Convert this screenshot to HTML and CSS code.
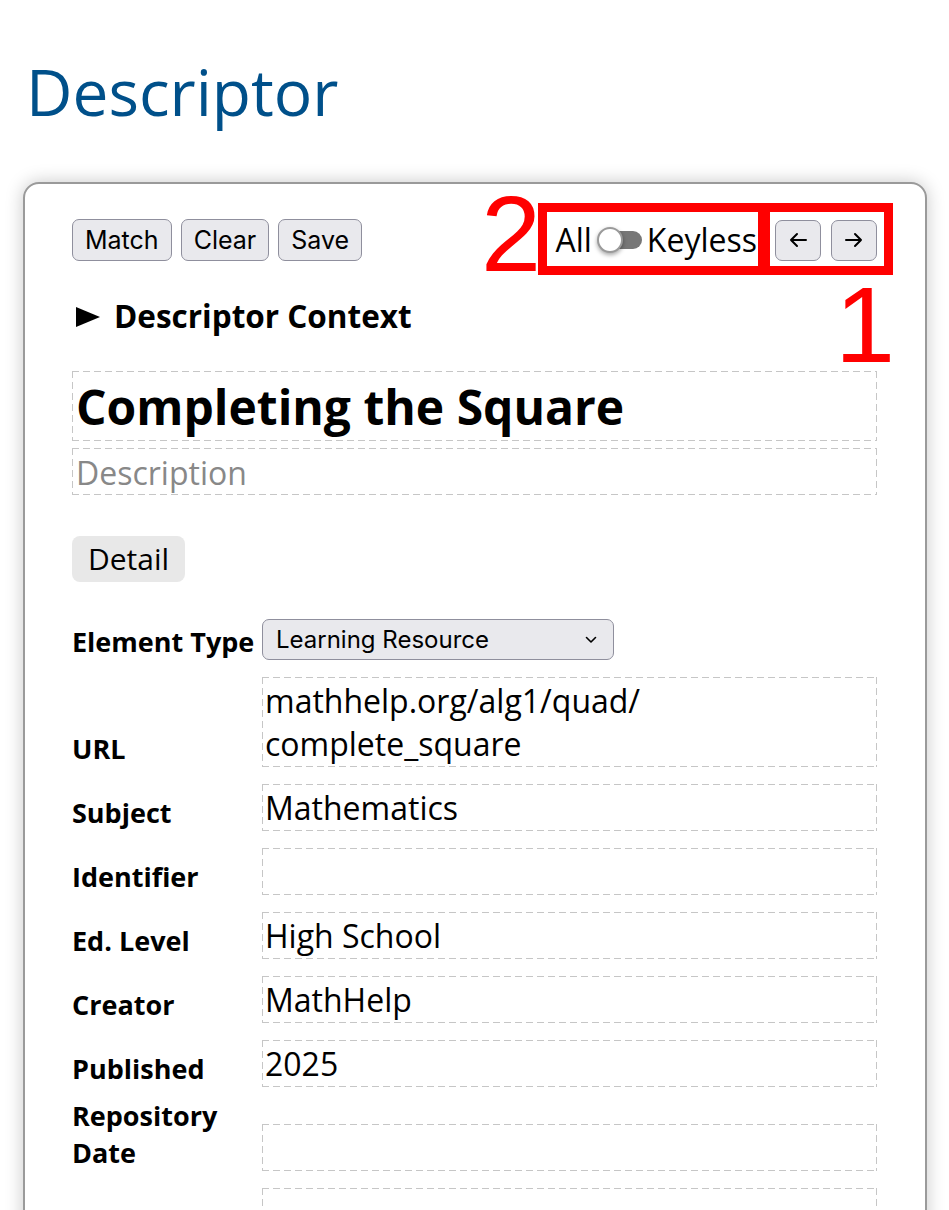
FILE: index.html
```html
<!DOCTYPE html>
<html lang="en">
<head>
<meta charset="utf-8">
<title>Descriptor</title>
<link rel="stylesheet" href="styles.css">
</head>
<body>
<h1 class="page-title">Descriptor</h1>
<section class="card">
  <div class="toolbar">
    <div class="actions">
      <button class="btn">Match</button>
      <button class="btn">Clear</button>
      <button class="btn">Save</button>
    </div>
    <div class="controls">
      <div class="mode-switch">
        <span>All</span>
        <span class="toggle"><span class="toggle-track"></span><span class="toggle-knob"></span></span>
        <span>Keyless</span>
      </div>
      <div class="nav">
        <button class="btn btn-icon" aria-label="Previous"><svg width="20" height="16" viewBox="0 0 20 16"><path d="M18 8H3M9 2L3 8l6 6" fill="none" stroke="#000" stroke-width="2" stroke-linecap="round" stroke-linejoin="round"/></svg></button>
        <button class="btn btn-icon" aria-label="Next"><svg width="20" height="16" viewBox="0 0 20 16"><path d="M2 8h15M11 2l6 6-6 6" fill="none" stroke="#000" stroke-width="2" stroke-linecap="round" stroke-linejoin="round"/></svg></button>
      </div>
    </div>
  </div>

  <div class="context"><svg class="context-marker" width="24" height="20" viewBox="0 0 24 20"><path d="M0 0L24 10L0 20Z" fill="#000"/></svg>Descriptor Context</div>

  <div class="title-field dashed">Completing the Square</div>
  <div class="desc-field dashed">Description</div>

  <button class="detail-btn">Detail</button>

  <div class="fields">
    <div class="label">Element Type</div>
    <div class="select">Learning Resource<svg class="chevron" width="12" height="8" viewBox="0 0 12 8"><path d="M1.5 1.5L6 6l4.5-4.5" fill="none" stroke="#000" stroke-width="1.6" stroke-linecap="round" stroke-linejoin="round"/></svg></div>

    <div class="label">URL</div>
    <div class="value dashed">mathhelp.org/alg1/quad/<br>complete_square</div>

    <div class="label">Subject</div>
    <div class="value dashed">Mathematics</div>

    <div class="label">Identifier</div>
    <div class="value dashed"></div>

    <div class="label">Ed. Level</div>
    <div class="value dashed">High School</div>

    <div class="label">Creator</div>
    <div class="value dashed">MathHelp</div>

    <div class="label">Published</div>
    <div class="value dashed">2025</div>

    <div class="label">Repository Date</div>
    <div class="value dashed"></div>

    <div class="label"></div>
    <div class="value dashed"></div>
  </div>

  <div class="mark-box mark-box-2"></div>
  <div class="mark-box mark-box-1"></div>
  <div class="mark-num mark-num-2">2</div>
  <div class="mark-num mark-num-1">1</div>
</section>
</body>
</html>
```

FILE: styles.css
```css
* { box-sizing: border-box; }

html, body {
  margin: 0;
  padding: 0;
  background: #fff;
  overflow: hidden;
}

body {
  font-family: "Open Sans", "Noto Sans", sans-serif;
  color: #000;
  padding: 0 22px 0 23px;
  height: 1210px;
}

.page-title {
  font-family: "Open Sans", sans-serif;
  font-weight: 400;
  font-size: 64px;
  line-height: normal;
  color: #00508a;
  margin: 0;
  padding: 48px 0 47px 3px;
}

.card {
  position: relative;
  border: 2px solid #9a9a9a;
  border-radius: 16px;
  box-shadow: 0 0 18px rgba(0, 0, 0, 0.22);
  padding: 35px 48px 40px 47px;
  background: #fff;
  height: 1200px;
}

.toolbar {
  display: flex;
  justify-content: space-between;
  align-items: center;
  height: 42px;
}

.actions {
  display: flex;
  gap: 9px;
}

.btn {
  font-family: Inter, "Liberation Sans", sans-serif;
  font-size: 25px;
  color: #000;
  background: #e9e9ed;
  border: 1px solid #8f8f9d;
  border-radius: 7px;
  height: 42px;
  padding: 0 12px;
  margin: 0;
  line-height: 40px;
}

.controls {
  display: flex;
  align-items: center;
  gap: 18px;
}

.mode-switch {
  display: flex;
  align-items: center;
  gap: 5px;
  font-size: 32px;
  line-height: 42px;
}

.toggle {
  position: relative;
  display: inline-block;
  width: 45px;
  height: 28px;
}

.toggle-track {
  position: absolute;
  right: 0;
  top: 5px;
  width: 38px;
  height: 18px;
  border-radius: 9px;
  background: #777;
}

.toggle-knob {
  position: absolute;
  left: 0;
  top: 1px;
  width: 26px;
  height: 26px;
  border-radius: 50%;
  background: #fff;
  border: 2px solid #9a9a9a;
  box-shadow: 0 2px 4px rgba(0, 0, 0, 0.35);
}

.nav {
  display: flex;
  gap: 10px;
}

.btn-icon {
  width: 46px;
  height: 41px;
  padding: 0;
  display: flex;
  align-items: center;
  justify-content: center;
}

.context {
  display: flex;
  align-items: center;
  gap: 14px;
  margin-top: 33px;
  padding-left: 4px;
  font-size: 31.5px;
  font-weight: 700;
  line-height: normal;
}

.context-marker {
  flex: none;
  margin-top: 2px;
}

.dashed {
  --dash: #c6c6c6;
  background-image:
    linear-gradient(90deg, var(--dash) 7px, transparent 7px),
    linear-gradient(90deg, var(--dash) 7px, transparent 7px),
    linear-gradient(180deg, var(--dash) 7px, transparent 7px),
    linear-gradient(180deg, var(--dash) 7px, transparent 7px);
  background-size: 11px 1px, 11px 1px, 1px 11px, 1px 11px;
  background-position: left top, left bottom, left top, right top;
  background-repeat: repeat-x, repeat-x, repeat-y, repeat-y;
}

.title-field {
  margin-top: 34px;
  padding: 3px 4px 2px;
  font-size: 48px;
  font-weight: 700;
  line-height: normal;
}

.desc-field {
  margin-top: 7px;
  padding: 3px 4px 1px;
  font-size: 32px;
  line-height: normal;
  color: #888;
}

.detail-btn {
  display: block;
  margin-top: 41px;
  font-family: "Open Sans", sans-serif;
  font-size: 30px;
  color: #000;
  background: #e8e8e8;
  border: none;
  border-radius: 8px;
  height: 46px;
  padding: 0 16px;
  line-height: 46px;
}

.fields {
  margin-top: 37px;
  display: grid;
  grid-template-columns: 190px 1fr;
  row-gap: 10px;
  align-items: end;
}

.label {
  font-size: 27px;
  font-weight: 700;
  line-height: normal;
}

.select {
  width: 352px;
  height: 41px;
  display: flex;
  align-items: center;
  justify-content: space-between;
  padding: 0 16px 0 13px;
  background: #e9e9ed;
  border: 1px solid #8f8f9d;
  border-radius: 7px;
  font-family: Inter, "Liberation Sans", sans-serif;
  font-size: 24px;
}

.value {
  margin-top: 7px;
  padding: 2px 3px 2px;
  font-size: 32px;
  line-height: normal;
  min-height: 47px;
}

.mark-box {
  position: absolute;
  top: 19px;
  height: 72px;
  border: 9px solid #ff0000;
}

.mark-box-2 {
  left: 513px;
  width: 232px;
}

.mark-box-1 {
  left: 733px;
  width: 135px;
}

.mark-num {
  position: absolute;
  font-family: "Liberation Sans", Arial, sans-serif;
  font-size: 108px;
  line-height: 1;
  color: #ff0000;
}

.mark-num-2 {
  left: 456px;
  top: -4px;
}

.mark-num-1 {
  left: 810px;
  top: 87px;
}
```
